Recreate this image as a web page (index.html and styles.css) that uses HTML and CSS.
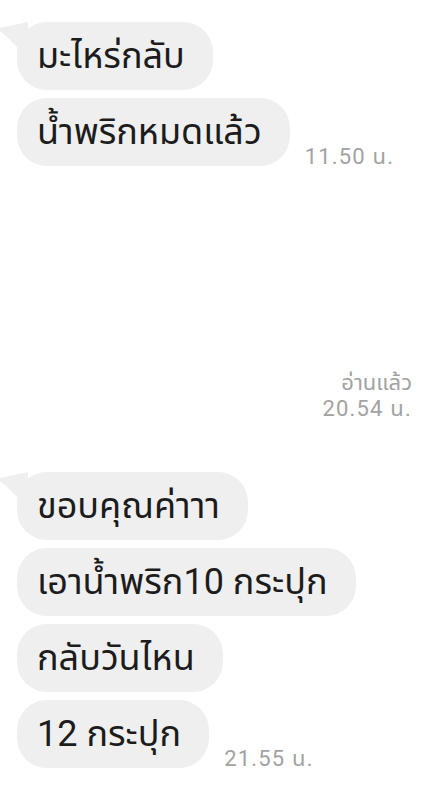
FILE: index.html
```html
<!DOCTYPE html>
<html lang="th">
<head>
<meta charset="utf-8">
<link rel="stylesheet" href="styles.css">
</head>
<body>
<main class="chat">
  <section class="group group-first">
    <div class="row">
      <div class="bubble has-tail">
        <svg class="tail" width="28" height="30" viewBox="0 0 28 30"><path d="M0 6 Q14 3 28 0 L28 30 Q22 26 17 25 Q9 16 1 10 Q-1 8 0 6 Z" fill="#efefef"/></svg>
        มะไหร่กลับ
      </div>
    </div>
    <div class="row">
      <div class="bubble">น้ำพริกหมดแล้ว</div>
      <span class="time">11.50 น.</span>
    </div>
  </section>

  <section class="read">
    <span class="read-label">อ่านแล้ว</span>
    <span class="read-time">20.54 น.</span>
  </section>

  <section class="group group-second">
    <div class="row">
      <div class="bubble has-tail">
        <svg class="tail" width="28" height="30" viewBox="0 0 28 30"><path d="M0 6 Q14 3 28 0 L28 30 Q22 26 17 25 Q9 16 1 10 Q-1 8 0 6 Z" fill="#efefef"/></svg>
        ขอบคุณค่าาา
      </div>
    </div>
    <div class="row">
      <div class="bubble">เอาน้ำพริก10 กระปุก</div>
    </div>
    <div class="row">
      <div class="bubble">กลับวันไหน</div>
    </div>
    <div class="row">
      <div class="bubble">12 กระปุก</div>
      <span class="time">21.55 น.</span>
    </div>
  </section>
</main>
</body>
</html>
```

FILE: styles.css
```css
* { box-sizing: border-box; }

html, body {
  margin: 0;
  padding: 0;
  background: #ffffff;
}

body {
  width: 424px;
  height: 796px;
  overflow: hidden;
  font-family: "Roboto", "Noto Sans Thai", "Noto Sans", sans-serif;
  color: #1c1c1c;
}

.chat {
  display: flex;
  flex-direction: column;
  padding: 22px 12px 0 17px;
}

.group {
  display: flex;
  flex-direction: column;
  gap: 8px;
}

.row {
  display: flex;
  align-items: flex-end;
  gap: 15px;
}

.bubble {
  position: relative;
  height: 68px;
  display: flex;
  align-items: center;
  padding: 0 28px 0 20px;
  background: #efefef;
  border-radius: 30px;
  font-size: 36px;
  line-height: 1;
  white-space: nowrap;
}

.tail {
  position: absolute;
  left: -17px;
  top: 0;
}

.time {
  font-size: 22px;
  letter-spacing: 1.2px;
  line-height: 22px;
  color: #a2a2a2;
  margin-bottom: -2px;
}

.read {
  display: flex;
  flex-direction: column;
  align-items: flex-end;
  margin-top: 204px;
  color: #a2a2a2;
  line-height: 26px;
}

.read-label {
  font-size: 22px;
}

.read-time {
  font-size: 22px;
  letter-spacing: 1.2px;
}

.group-second {
  margin-top: 50px;
}
```
